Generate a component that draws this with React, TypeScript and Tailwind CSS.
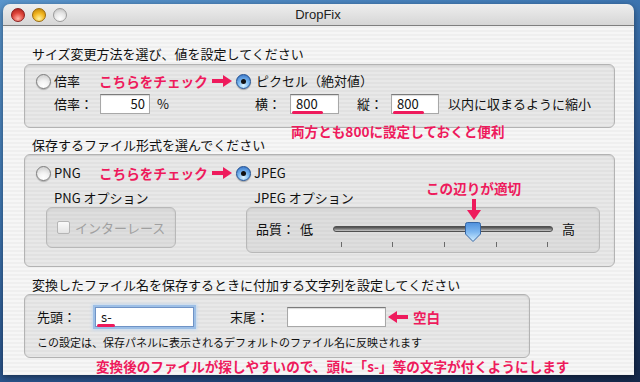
import React from "react";

const RED = "#ee1a5c";

const Radio: React.FC<{ on?: boolean }> = ({ on }) =>
  on ? (
    <span className="flex h-[15px] w-[15px] shrink-0 items-center justify-center rounded-full border border-[#1f4f91] bg-[radial-gradient(circle_at_50%_80%,#dff4ff_0%,#7fbdf2_40%,#2a67c0_100%)] shadow-[0_1px_1px_rgba(0,0,0,0.3)]">
      <span className="h-[5px] w-[5px] rounded-full bg-[#111]" />
    </span>
  ) : (
    <span className="h-[15px] w-[15px] shrink-0 rounded-full border border-[#7d7d7d] bg-[radial-gradient(circle_at_50%_85%,#ffffff_0%,#f3f3f3_40%,#c6c6c6_100%)] shadow-[0_1px_1px_rgba(0,0,0,0.25)]" />
  );

const ArrowRight: React.FC<{ flip?: boolean }> = ({ flip }) => (
  <svg width="20" height="12" viewBox="0 0 20 12" className={flip ? "-scale-x-100" : ""}>
    <rect x="0" y="4" width="12" height="4" fill={RED} />
    <path d="M11 0 L20 6 L11 12 Z" fill={RED} />
  </svg>
);

const Field: React.FC<{
  w: string;
  value?: string;
  right?: boolean;
  mark?: string;
  focus?: boolean;
}> = ({ w, value, right, mark, focus }) => (
  <div
    className={`relative h-[20px] ${w} shrink-0 bg-white border ${
      focus
        ? "border-[#6f93c6] shadow-[0_0_0_2px_#9dbfe6,0_0_3px_3px_#c3d8f0]"
        : "border-[#a8a8a8] border-t-[#7b7b7b] shadow-[inset_0_1px_1px_rgba(0,0,0,0.15)]"
    } flex items-center ${right ? "justify-end pr-[4px]" : "pl-[5px]"} text-[13px] leading-[16px] text-[#111]`}
  >
    {value}
    {mark && <span className={`absolute left-[1px] bottom-[-1px] h-[3px] ${mark} rounded-full bg-[#ee1a5c]`} />}
  </div>
);

const Group: React.FC<{ className?: string; children: React.ReactNode }> = ({ className, children }) => (
  <div
    className={`relative shrink-0 rounded-[6px] border border-[#b3b3b3] bg-black/[0.055] shadow-[inset_0_1px_2px_rgba(0,0,0,0.1)] ${className ?? ""}`}
  >
    {children}
  </div>
);

const App: React.FC = () => {
  return (
    <div className="h-[382px] w-[640px] overflow-hidden bg-[linear-gradient(160deg,#5a95cc_0%,#3f78b4_35%,#24497f_70%,#15284a_100%)] pl-[3px] pt-[4px] font-['Noto_Sans_CJK_JP',sans-serif] text-[#111]">
      <div className="flex h-[371px] w-[631px] flex-col overflow-hidden rounded-t-[7px] shadow-[0_2px_6px_rgba(0,0,0,0.45)]">
        {/* title bar */}
        <div className="relative flex h-[22px] shrink-0 items-center border-b border-[#7f7f7f] bg-[linear-gradient(180deg,#eeeeee,#d6d6d6)]">
          <div className="ml-[8px] flex gap-[7px]">
            <span className="h-[14px] w-[14px] rounded-full border border-[#8b1d1d] bg-[radial-gradient(circle_at_50%_80%,#ffb3a8_0%,#e0463b_50%,#9e1a16_100%)]" />
            <span className="h-[14px] w-[14px] rounded-full border border-[#9a6a0c] bg-[radial-gradient(circle_at_50%_80%,#fff2a0_0%,#f2b51e_50%,#b47a08_100%)]" />
            <span className="h-[14px] w-[14px] rounded-full border border-[#9a9a9a] bg-[radial-gradient(circle_at_50%_80%,#ffffff_0%,#e6e6e6_50%,#b9b9b9_100%)]" />
          </div>
          <span className="flex-1 pr-[65px] text-center text-[13px] leading-[16px] font-['Liberation_Sans',sans-serif] text-[#222]">
            DropFix
          </span>
        </div>

        {/* content */}
        <div className="flex flex-1 flex-col bg-[repeating-linear-gradient(180deg,#efefef_0px,#efefef_2px,#f6f6f6_2px,#f6f6f6_4px)]">
          <div className="ml-[29px] mt-[20px] shrink-0 text-[13px] leading-[16px]">サイズ変更方法を選び、値を設定してください</div>

          <Group className="ml-[21px] mt-[2px] h-[64px] w-[591px]">
            <div className="mt-[7px] flex h-[18px] items-center pl-[11px] text-[13px] leading-[16px]">
              <div className="flex w-[63px] items-center gap-[3px]">
                <Radio />
                <span>倍率</span>
              </div>
              <div className="w-[113px] text-[13.6px] font-bold" style={{ color: RED }}>
                こちらをチェック
              </div>
              <div className="w-[24px]">
                <ArrowRight />
              </div>
              <div className="flex items-center gap-[5px]">
                <Radio on />
                <span>ピクセル（絶対値）</span>
              </div>
            </div>
            <div className="mt-[4px] flex h-[20px] items-center pl-[29px] text-[13px] leading-[16px]">
              <span className="w-[46px]">倍率：</span>
              <Field w="w-[50px]" value="50" right />
              <span className="w-[105px] pl-[7px]">%</span>
              <span className="w-[35px]">横：</span>
              <Field w="w-[49px]" value="800" mark="w-[31px]" />
              <span className="w-[52px] pl-[18px]">縦：</span>
              <Field w="w-[48px]" value="800" mark="w-[31px]" />
              <span className="ml-[9px]">以内に収まるように縮小</span>
            </div>
            <div className="absolute left-[266px] top-[57px] text-[13.6px] font-bold leading-[18px]" style={{ color: RED }}>
              両方とも800に設定しておくと便利
            </div>
          </Group>

          <div className="ml-[29px] mt-[9px] shrink-0 text-[13px] leading-[16px]">保存するファイル形式を選んでください</div>

          <Group className="ml-[21px] mt-[1px] h-[113px] w-[591px]">
            <div className="mt-[9px] flex h-[18px] items-center pl-[11px] text-[13px] leading-[16px]">
              <div className="flex w-[63px] items-center gap-[3px]">
                <Radio />
                <span>PNG</span>
              </div>
              <div className="w-[113px] text-[13.6px] font-bold" style={{ color: RED }}>
                こちらをチェック
              </div>
              <div className="w-[24px]">
                <ArrowRight />
              </div>
              <div className="flex items-center gap-[3px]">
                <Radio on />
                <span>JPEG</span>
              </div>
            </div>
            <div className="mt-[8px] flex pl-[21px] text-[13px] leading-[16px]">
              <div className="w-[200px]">
                <div className="pl-[8px]">PNG オプション</div>
                <div className="mt-[1px] flex h-[41px] w-[130px] items-center gap-[5px] rounded-[6px] border border-[#b8b8b8] bg-black/[0.04] pl-[10px] shadow-[inset_0_1px_2px_rgba(0,0,0,0.08)]">
                  <span className="h-[13px] w-[13px] rounded-[2px] border border-[#b5b5b5] bg-[linear-gradient(180deg,#fafafa,#e4e4e4)]" />
                  <span className="text-[#a0a0a0]">インターレース</span>
                </div>
              </div>
              <div className="w-[354px]">
                <div className="pl-[8px]">JPEG オプション</div>
                <div className="mt-[1px] h-[46px] w-[354px] rounded-[6px] border border-[#b8b8b8] bg-black/[0.04] pl-[9px] pt-[13px] shadow-[inset_0_1px_2px_rgba(0,0,0,0.08)]">
                  <div className="flex h-[16px] items-center">
                    <span className="w-[44px]">品質：</span>
                    <span className="w-[33px]">低</span>
                    <div className="relative h-[16px] w-[220px]">
                      <div className="absolute left-0 right-0 top-[5px] h-[6px] rounded-full border border-[#505050] bg-[linear-gradient(180deg,#4a4a4a,#8c8c8c_60%,#c8c8c8)]" />
                      {[8, 59, 111, 163, 214].map((x) => (
                        <span key={x} className="absolute top-[21px] h-[5px] w-[1px] bg-[#6a6a6a]" style={{ left: x }} />
                      ))}
                      <svg className="absolute left-[132px] top-[1px]" width="16" height="20" viewBox="0 0 16 20">
                        <defs>
                          <linearGradient id="th" x1="0" y1="0" x2="0" y2="1">
                            <stop offset="0" stopColor="#4e8fdc" />
                            <stop offset="0.5" stopColor="#7fb8f0" />
                            <stop offset="1" stopColor="#d2efff" />
                          </linearGradient>
                        </defs>
                        <path d="M2.5 0.5 H13.5 Q15.5 0.5 15.5 2.5 V12 L8 19.5 L0.5 12 V2.5 Q0.5 0.5 2.5 0.5 Z" fill="url(#th)" stroke="#3565a3" />
                      </svg>
                    </div>
                    <span className="ml-[9px]">高</span>
                  </div>
                </div>
              </div>
            </div>
            <div className="absolute left-[401px] top-[24px] text-[13.6px] font-bold leading-[18px]" style={{ color: RED }}>
              この辺りが適切
            </div>
            <svg className="absolute left-[442px] top-[44px]" width="14" height="21" viewBox="0 0 14 21">
              <rect x="5" y="0" width="4" height="12" fill={RED} />
              <path d="M0 11 H14 L7 21 Z" fill={RED} />
            </svg>
          </Group>

          <div className="ml-[29px] mt-[10px] shrink-0 text-[13px] leading-[16px]">
            変換したファイル名を保存するときに付加する文字列を設定してください
          </div>

          <Group className="ml-[21px] mt-[1px] h-[64px] w-[506px]">
            <div className="mt-[12px] flex h-[20px] items-center pl-[12px] text-[13px] leading-[16px]">
              <span className="w-[58px]">先頭：</span>
              <Field w="w-[99px]" value="s-" focus mark="w-[18px]" />
              <span className="w-[93px] pl-[36px]">末尾：</span>
              <Field w="w-[99px]" />
              <div className="ml-[2px] w-[20px]">
                <ArrowRight flip />
              </div>
              <span className="ml-[5px] text-[13.6px] font-bold" style={{ color: RED }}>
                空白
              </span>
            </div>
            <div className="mt-[8px] pl-[12px] text-[11px] leading-[14px]">
              この設定は、保存パネルに表示されるデフォルトのファイル名に反映されます
            </div>
          </Group>

          <div className="ml-[93px] h-[17px] shrink-0 text-[13.6px] font-bold leading-[17px]" style={{ color: RED }}>
            変換後のファイルが探しやすいので、頭に「s-」等の文字が付くようにします
          </div>
        </div>
      </div>
    </div>
  );
};

export default App;
